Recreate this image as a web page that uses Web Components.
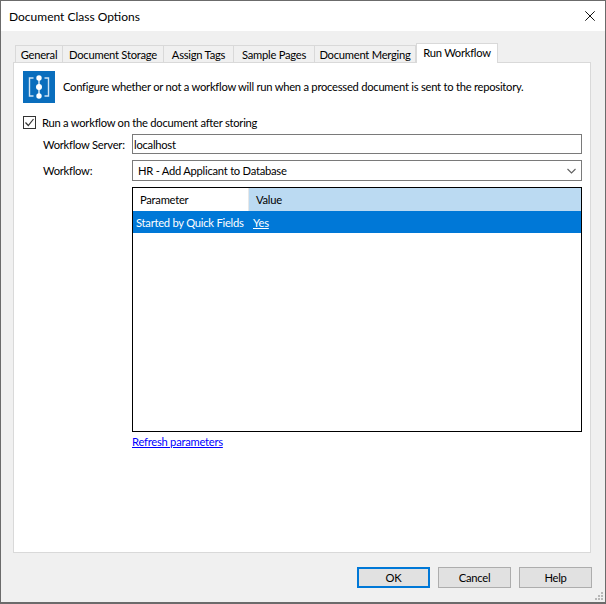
<!DOCTYPE html>
<html>
<head>
<meta charset="utf-8">
<title>Document Class Options</title>
<style>
  html, body { margin: 0; padding: 0; background: #f0f0f0; }
  body { font: 12px Lato, "Noto Sans", sans-serif; color: #000; }
</style>
</head>
<body>
<dialog-window caption="Document Class Options">
  <tab-strip>
    <tab-item w="48">General</tab-item>
    <tab-item w="101">Document Storage</tab-item>
    <tab-item w="70">Assign Tags</tab-item>
    <tab-item w="81">Sample Pages</tab-item>
    <tab-item w="101">Document Merging</tab-item>
    <tab-item w="82" active>Run Workflow</tab-item>
  </tab-strip>
  <workflow-panel></workflow-panel>
  <dialog-buttons slot="footer"></dialog-buttons>
</dialog-window>

<script>
const FONT = `Lato, "Noto Sans", sans-serif`;

class DialogWindow extends HTMLElement {
  connectedCallback() {
    const shadow = this.attachShadow({ mode: "open" });
    shadow.innerHTML = `
      <style>
        :host { display:flex; flex-direction:column; box-sizing:border-box; width:606px; height:604px;
          border:1px solid #6b6b6b; border-bottom-width:2px; background:#f0f0f0; font:11.2px ${FONT}; letter-spacing:-.25px; position:relative; overflow:hidden; }
        .title { height:30px; background:#fff; display:flex; align-items:center; justify-content:space-between; padding:0 10px 0 8px; flex:none; }
        .title span { font-size:12px; letter-spacing:0; }
        .title svg { display:block; }
        .body { flex:1; display:flex; flex-direction:column; padding:12px 14px 0 12px; min-height:0; }
        .foot { flex:none; height:49px; }
        .grip { position:absolute; right:1px; bottom:1px; }
      </style>
      <div class="title"><span>${this.getAttribute("caption")}</span>
        <svg width="10" height="10" viewBox="0 0 10 10"><path d="M.3.3l9.400 9.400M9.700.3L.3 9.700" stroke="#111" fill="none"/></svg>
      </div>
      <div class="body"><slot></slot></div>
      <div class="foot"><slot name="footer"></slot></div>
      <svg class="grip" width="9" height="9" viewBox="0 0 9 9" fill="#b8b8b8">
        <rect x="6" y="0" width="2" height="2"/><rect x="3" y="3" width="2" height="2"/><rect x="6" y="3" width="2" height="2"/>
        <rect x="0" y="6" width="2" height="2"/><rect x="3" y="6" width="2" height="2"/><rect x="6" y="6" width="2" height="2"/>
      </svg>`;
  }
}

class TabStrip extends HTMLElement {
  connectedCallback() {
    const shadow = this.attachShadow({ mode: "open" });
    shadow.innerHTML = `
      <style>
        :host { display:flex; align-items:flex-end; height:20px; flex:none; padding-left:2px; position:relative; z-index:1; margin-bottom:-1px; }
      </style>
      <slot></slot>`;
  }
}

class TabItem extends HTMLElement {
  connectedCallback() {
    const shadow = this.attachShadow({ mode: "open" });
    const active = this.hasAttribute("active");
    shadow.innerHTML = `
      <style>
        :host { display:flex; box-sizing:border-box; width:${this.getAttribute("w")}px; height:${active ? 20 : 18}px;
          justify-content:center; align-items:center; white-space:nowrap;
          border:1px solid #d9d9d9; border-left-width:${active ? 1 : 0}px; border-bottom:${active ? "0" : "1px solid #d9d9d9"};
          background:${active ? "#fff" : "#f0f0f0"}; padding-bottom:${active ? 2 : 0}px; }
        :host(:first-child) { border-left-width:1px; }
      </style>
      <slot></slot>`;
  }
}

class WorkflowPanel extends HTMLElement {
  connectedCallback() {
    const shadow = this.attachShadow({ mode: "open" });
    shadow.innerHTML = `
      <style>
        :host { display:flex; flex-direction:column; flex:1; box-sizing:border-box; background:#fff; border:1px solid #d9d9d9;
          padding:7px 8px 0 9px; min-height:0; }
        .intro { display:flex; align-items:center; gap:8px; height:33px; white-space:nowrap; }
        .intro svg { display:block; flex:none; }
        .check { display:flex; align-items:center; gap:6px; height:14px; margin-top:12px; white-space:nowrap; }
        .check svg { display:block; flex:none; }
        .rows { display:grid; grid-template-columns:89px 450px; row-gap:6px; margin:5px 0 0 20px; }
        .rows label { display:flex; align-items:center; white-space:nowrap; }
        .grid-wrap { margin:6px 0 0 109px; width:450px; }
        a { color:#00f; text-decoration:underline; display:block; margin-top:2px; line-height:16px; }
      </style>
      <div class="intro">
        <svg width="32" height="32" viewBox="0 0 32 32">
          <rect width="32" height="32" fill="#0a6ebd"/>
          <path d="M10.500 7H6.500v18h4M21.500 7h4v18h-4" fill="none" stroke="#cfe4f5" stroke-width="1.400"/>
          <path d="M16 7v18" stroke="#e8f2fa" stroke-width="1.400"/>
          <circle cx="16" cy="7" r="2.700" fill="#fff"/><circle cx="16" cy="16" r="3" fill="#fff"/><circle cx="16" cy="25" r="2.700" fill="#fff"/>
        </svg>
        <span>Configure whether or not a workflow will run when a processed document is sent to the repository.</span>
      </div>
      <div class="check">
        <svg width="13" height="13" viewBox="0 0 13 13"><rect x=".5" y=".5" width="12" height="12" fill="#fff" stroke="#333"/><path d="M2.500 6.500l2.800 3 5.200-6.500" fill="none" stroke="#333" stroke-width="1.200"/></svg>
        <span>Run a workflow on the document after storing</span>
      </div>
      <div class="rows">
        <label>Workflow Server:</label><text-field>localhost</text-field>
        <label>Workflow:</label><combo-field>HR - Add Applicant to Database</combo-field>
      </div>
      <div class="grid-wrap">
        <param-grid></param-grid>
        <a href="#">Refresh parameters</a>
      </div>`;
  }
}

class TextField extends HTMLElement {
  connectedCallback() {
    const shadow = this.attachShadow({ mode: "open" });
    shadow.innerHTML = `
      <style>
        :host { display:flex; align-items:center; box-sizing:border-box; height:20px; border:1px solid #7a7a7a; background:#fff; padding-left:1px; }
      </style>
      <slot></slot>`;
  }
}

class ComboField extends HTMLElement {
  connectedCallback() {
    const shadow = this.attachShadow({ mode: "open" });
    shadow.innerHTML = `
      <style>
        :host { display:flex; align-items:center; justify-content:space-between; box-sizing:border-box; height:21px; border:1px solid #7a7a7a; background:#fff; padding:0 5px 0 5px; }
        svg { display:block; }
      </style>
      <slot></slot>
      <svg width="9" height="6" viewBox="0 0 9 6"><path d="M.5 1l4 4 4-4" fill="none" stroke="#606060" stroke-width="1.100"/></svg>`;
  }
}

class ParamGrid extends HTMLElement {
  connectedCallback() {
    const shadow = this.attachShadow({ mode: "open" });
    shadow.innerHTML = `
      <style>
        :host { display:block; box-sizing:border-box; height:245px; border:1px solid #000; background:#fff; }
        .row { display:grid; grid-template-columns:115px 1fr; align-items:center; }
        .head { height:23px; }
        .head div { height:100%; display:flex; align-items:center; padding-left:7px; }
        .head .v { background:#bbdaf2; border-left:1px solid #e8e8e8; }
        .sel { height:22px; background:#0078d7; color:#fff; }
        .sel div:first-child { padding-left:3px; white-space:nowrap; }
        .sel div:last-child { padding-left:5px; text-decoration:underline; }
      </style>
      <div class="row head"><div>Parameter</div><div class="v">Value</div></div>
      <div class="row sel"><div>Started by Quick Fields</div><div>Yes</div></div>`;
  }
}

class DialogButtons extends HTMLElement {
  connectedCallback() {
    const shadow = this.attachShadow({ mode: "open" });
    shadow.innerHTML = `
      <style>
        :host { display:flex; justify-content:flex-end; gap:8px; padding:14px 13px 0 0; }
        div { box-sizing:border-box; width:73px; height:21px; display:flex; align-items:center; justify-content:center;
          background:#e1e1e1; border:1px solid #adadad; }
        .def { border:2px solid #0078d7; }
      </style>
      <div class="def">OK</div><div>Cancel</div><div>Help</div>`;
  }
}

customElements.define("dialog-window", DialogWindow);
customElements.define("tab-strip", TabStrip);
customElements.define("tab-item", TabItem);
customElements.define("workflow-panel", WorkflowPanel);
customElements.define("text-field", TextField);
customElements.define("combo-field", ComboField);
customElements.define("param-grid", ParamGrid);
customElements.define("dialog-buttons", DialogButtons);
</script>
</body>
</html>
